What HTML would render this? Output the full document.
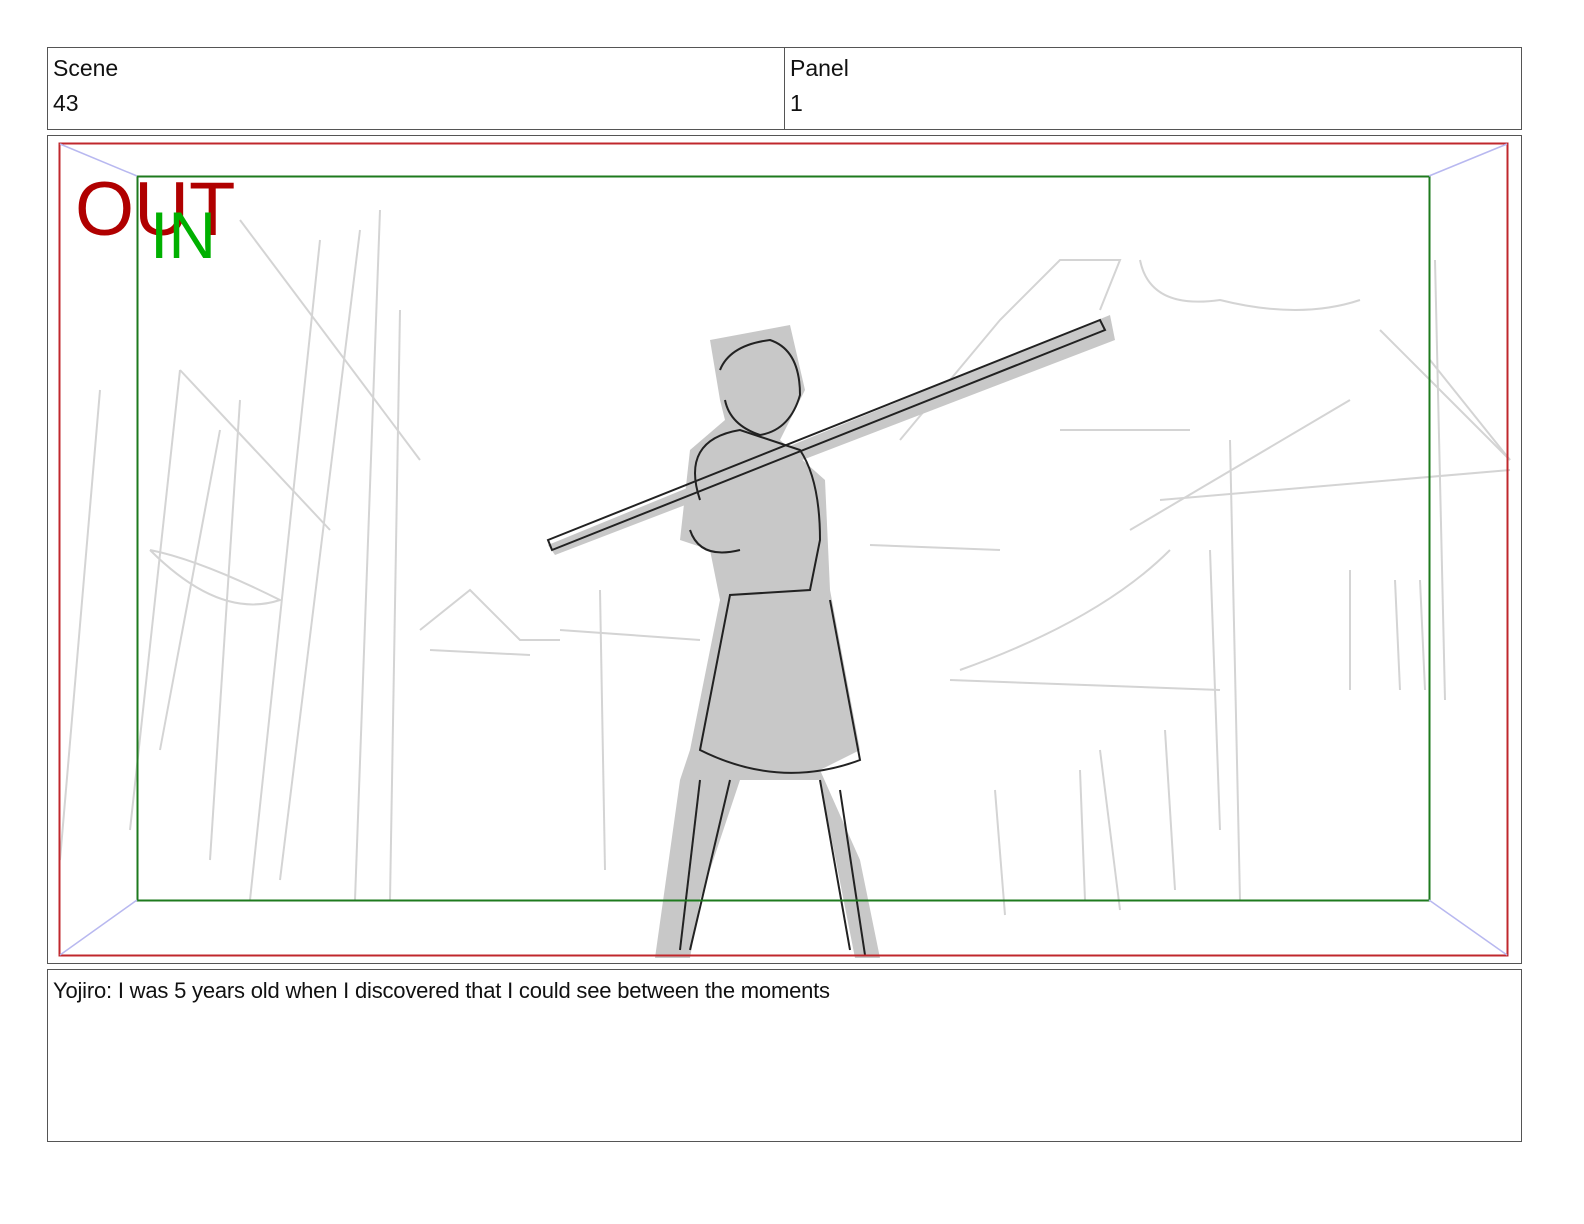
<!DOCTYPE html>
<html style="overflow:hidden"><head><meta charset="utf-8"><style>
html,body{margin:0;padding:0;overflow:hidden}
body{width:1584px;height:1224px;background:#fff;font-family:"Liberation Sans",sans-serif;position:relative}
.box{position:absolute;border:1px solid #555;box-sizing:border-box}
.t{position:absolute;font-size:23px;color:#111}
</style></head><body>
<div class="box" style="left:47px;top:47px;width:1475px;height:83px"></div>
<div style="position:absolute;left:784px;top:47px;width:1px;height:83px;background:#555"></div>
<div class="t" style="left:53px;top:55px">Scene</div>
<div class="t" style="left:53px;top:90px">43</div>
<div class="t" style="left:790px;top:55px">Panel</div>
<div class="t" style="left:790px;top:90px">1</div>
<div class="box" style="left:47px;top:135px;width:1475px;height:829px"></div>
<div class="box" style="left:47px;top:969px;width:1475px;height:173px"></div>
<div class="t" style="left:53px;top:978px;font-size:22px;letter-spacing:-0.2px">Yojiro: I was 5 years old when I discovered that I could see between the moments</div>
<svg style="position:absolute;left:0;top:0" width="1584" height="1224">
<g stroke="#d4d4d4" stroke-width="2" fill="none">
<path d="M60 860 L100 390"/><path d="M130 830 L180 370"/><path d="M160 750 L220 430"/><path d="M210 860 L240 400"/><path d="M250 900 L320 240"/><path d="M280 880 L360 230"/><path d="M355 900 L380 210"/><path d="M390 900 L400 310"/><path d="M180 370 L330 530"/><path d="M240 220 L420 460"/><path d="M150 550 Q220 620 280 600 Q200 560 150 550"/>
<path d="M420 630 L470 590 L520 640 L560 640"/><path d="M430 650 L530 655"/>
<path d="M600 590 L605 870"/><path d="M560 630 L700 640"/>
<path d="M1100 310 L1120 260 L1060 260 L1000 320 L900 440"/><path d="M1140 260 Q1150 310 1220 300 Q1300 320 1360 300"/><path d="M1380 330 L1510 460"/><path d="M1130 530 L1350 400"/><path d="M1160 500 L1510 470"/><path d="M950 680 L1220 690"/><path d="M960 670 Q1100 620 1170 550"/><path d="M1230 440 L1240 900"/><path d="M1210 550 L1220 830"/><path d="M1165 730 L1175 890"/><path d="M1100 750 L1120 910"/><path d="M1080 770 L1085 900"/><path d="M995 790 L1005 915"/><path d="M1350 570 L1350 690"/><path d="M1395 580 L1400 690"/><path d="M1420 580 L1425 690"/><path d="M1435 260 L1445 700"/><path d="M870 545 L1000 550"/><path d="M1060 430 L1190 430"/><path d="M1430 360 L1510 460"/>
</g>
<g fill="#c8c8c8">
<path d="M710 340 L790 325 L805 390 L780 440 L825 480 L830 590 L860 750 L820 770 L860 860 L880 958 L855 958 L820 780 L740 780 L700 900 L690 958 L655 958 L680 780 L690 750 L720 600 L710 550 L680 540 L690 450 L725 420 L720 400Z"/>
<path d="M548 545 L1110 315 L1115 340 L555 555Z"/>
</g>
<g stroke="#222" stroke-width="2" fill="none">
<path d="M548 540 L1100 320 L1105 330 L552 550Z"/><path d="M720 370 Q730 345 770 340 Q800 350 800 395 Q790 430 760 435 Q730 425 725 400"/><path d="M700 500 Q680 440 740 430 L800 450 Q820 480 820 540 L810 590 L730 595 L700 750 Q780 790 860 760 L830 600"/><path d="M690 530 Q700 560 740 550"/><path d="M700 780 L680 950"/><path d="M730 780 L690 950"/><path d="M820 780 L850 950"/><path d="M840 790 L865 955"/>
</g>
<rect x="59.5" y="143.5" width="1448" height="812" fill="none" stroke="#c0282d" stroke-width="2"/>
<rect x="137.5" y="176.5" width="1292" height="724" fill="none" stroke="#1e7a1e" stroke-width="2"/>
<g stroke="#b8b8f0" stroke-width="1.5"><line x1="60" y1="144" x2="137" y2="176"/><line x1="1507" y1="144" x2="1429" y2="176"/><line x1="60" y1="955" x2="137" y2="900"/><line x1="1507" y1="955" x2="1429" y2="900"/></g>
<text x="75" y="235" font-family="Liberation Sans,sans-serif" font-size="76" fill="#b00000">OUT</text>
<text x="150" y="258" font-family="Liberation Sans,sans-serif" font-size="66" fill="#00b000">IN</text>
</svg>
</body></html>
